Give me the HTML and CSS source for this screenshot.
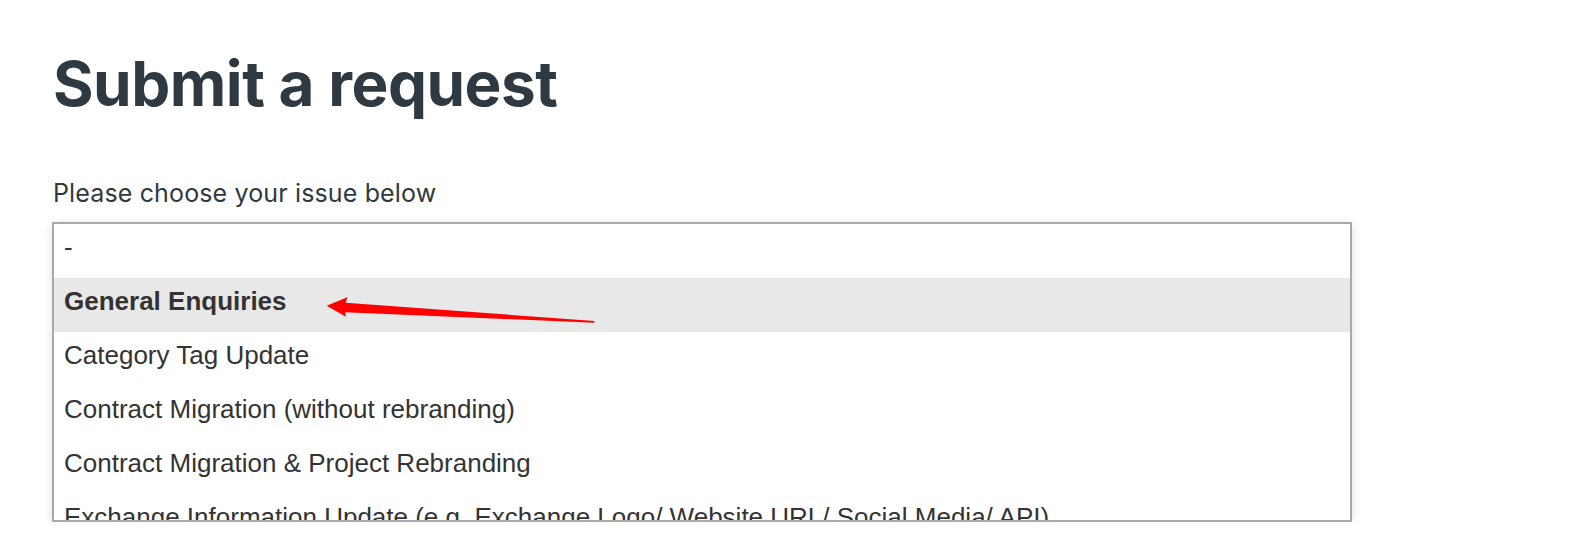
FILE: index.html
```html
<!DOCTYPE html>
<html lang="en">
<head>
    <meta charset="UTF-8">
    <title>Submit a request</title>
    <link rel="stylesheet" href="styles.css">
</head>
<body>
    <div class="page">
        <h1>Submit a request</h1>
        <label class="field-label">Please choose your issue below</label>
        <div class="listbox-wrap">
            <ul class="listbox">
                <li class="option">-</li>
                <li class="option selected">General Enquiries</li>
                <li class="option">Category Tag Update</li>
                <li class="option">Contract Migration (without rebranding)</li>
                <li class="option">Contract Migration &amp; Project Rebranding</li>
                <li class="option">Exchange Information Update (e.g. Exchange Logo/ Website URL/ Social Media/ API)</li>
            </ul>
            <!-- annotation arrow pointing at the selected option -->
            <svg class="arrow" width="280" height="40" viewBox="0 0 280 40">
                <polygon points="6.7,15.7 27.3,7.3 25.7,12.7 274.3,31 274.3,32.7 25,22.3 26,26.7" fill="#ff0000"/>
            </svg>
        </div>
    </div>
</body>
</html>
```

FILE: styles.css
```css
body {
    margin: 0;
    background: #fff;
    font-family: Inter, "Noto Sans", sans-serif;
    color: #2f3941;
}

.page {
    padding: 44px 0 0 53px;
    width: 1299px;
}

h1 {
    margin: 0;
    font-size: 62px;
    font-weight: 700;
    line-height: 80px;
    letter-spacing: -0.5px;
}

.field-label {
    display: block;
    margin-top: 54px;
    font-size: 25px;
    line-height: 30px;
    letter-spacing: 0.14px;
}

.listbox-wrap {
    position: relative;
    margin: 14px 0 0 -1px;
}

.listbox {
    list-style: none;
    margin: 0;
    padding: 0;
    height: 296px;
    overflow: hidden;
    border: 2px solid #a9a9a9;
    box-shadow: 0 2px 10px rgba(0,0,0,0.12);
    font-family: "Liberation Sans", Arial, sans-serif;
    font-size: 26px;
    color: #333;
}

.option {
    height: 44px;
    line-height: 44px;
    padding: 1px 10px 9px;
    white-space: nowrap;
}

.selected {
    background: #e8e8e8;
    font-weight: bold;
}

.arrow {
    position: absolute;
    left: 268px;
    top: 68px;
}
```
